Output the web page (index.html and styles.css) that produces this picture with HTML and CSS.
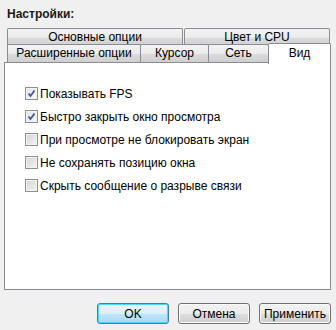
FILE: index.html
```html
<!DOCTYPE html>
<html>
<head>
    <meta charset="utf-8">
    <link rel="stylesheet" href="styles.css">
</head>
<body>
    <main class="dialog">
        <div class="title">Настройки:</div>
        <div class="tabs">
            <div class="tab-row">
                <div class="tab tab-main">Основные опции</div>
                <div class="tab tab-color">Цвет и CPU</div>
            </div>
            <div class="tab-row tab-row-front">
                <div class="tab tab-ext">Расширенные опции</div>
                <div class="tab tab-cursor">Курсор</div>
                <div class="tab tab-net">Сеть</div>
                <div class="tab tab-view active">Вид</div>
            </div>
        </div>
        <div class="panel">
            <label class="option"><span class="check checked"><svg viewBox="0 0 11 11" width="11" height="11"><path d="M2.5 5.5 L4.5 8 L8.5 2.5" fill="none" stroke="#3d5a9e" stroke-width="1.8"/></svg></span>Показывать FPS</label>
            <label class="option"><span class="check checked"><svg viewBox="0 0 11 11" width="11" height="11"><path d="M2.5 5.5 L4.5 8 L8.5 2.5" fill="none" stroke="#3d5a9e" stroke-width="1.8"/></svg></span>Быстро закрыть окно просмотра</label>
            <label class="option"><span class="check"></span>При просмотре не блокировать экран</label>
            <label class="option"><span class="check"></span>Не сохранять позицию окна</label>
            <label class="option"><span class="check"></span>Скрыть сообщение о разрыве связи</label>
        </div>
        <div class="buttons">
            <button class="btn default">OK</button>
            <button class="btn">Отмена</button>
            <button class="btn">Применить</button>
        </div>
    </main>
</body>
</html>
```

FILE: styles.css
```css
* {
    box-sizing: border-box;
}
body {
    margin: 0;
    background: #f0f0f0;
    font-family: "Liberation Sans", Arial, sans-serif;
    font-size: 12px;
    color: #000;
}
.dialog {
    width: 336px;
    height: 330px;
    padding-top: 6px;
}
.title {
    font-weight: bold;
    font-size: 12px;
    line-height: 16px;
    margin-left: 7px;
    margin-bottom: 6px;
    color: #1a1a1a;
}
.tabs {
    margin-left: 7px;
    width: 324px;
}
.tab-row {
    display: flex;
    height: 17px;
}
.tab-row-front {
    align-items: flex-end;
}
.tab {
    height: 18px;
    line-height: 16px;
    text-align: center;
    border: 1px solid #898c95;
    border-bottom: none;
    border-radius: 2px 2px 0 0;
    background: linear-gradient(#f3f3f3, #ebebeb 50%, #dcdcdc 51%, #cfcfcf);
    margin-right: -1px;
}
.tab-main {
    width: 176px;
}
.tab-color {
    width: 146px;
    margin-left: 2px;
}
.tab-ext {
    width: 134px;
}
.tab-cursor {
    width: 69px;
}
.tab-net {
    width: 61px;
}
.tab-view.active {
    position: relative;
    z-index: 1;
    width: 63px;
    height: 21px;
    margin-bottom: -2px;
    background: #fff;
    line-height: 18px;
}
.panel {
    margin-left: 4px;
    width: 327px;
    height: 228px;
    background: #fff;
    border: 1px solid #898c95;
    padding: 19px 0 0 20px;
}
.option {
    display: flex;
    align-items: center;
    height: 23px;
}
.check {
    width: 13px;
    height: 13px;
    border: 1px solid #8e8f8f;
    background: linear-gradient(135deg, #d2d4d8, #f4f4f4);
    box-shadow: inset 0 0 0 1px #f4f4f4;
    margin-right: 2px;
    display: flex;
    align-items: center;
    justify-content: center;
}
.check.checked {
    background: linear-gradient(135deg, #e0e4ea, #f8f8f8);
}
.buttons {
    display: flex;
    justify-content: flex-end;
    gap: 9px;
    margin-top: 13px;
    width: 331px;
}
.btn {
    width: 72px;
    height: 21px;
    font-family: "Liberation Sans", Arial, sans-serif;
    font-size: 12px;
    color: #000;
    border: 1px solid #707070;
    border-radius: 3px;
    background: linear-gradient(#f2f2f2, #ebebeb 50%, #dddddd 51%, #cfcfcf);
    box-shadow: inset 0 0 0 1px #fbfbfb;
    padding: 0;
}
.btn.default {
    border-color: #3c7fb1;
    background: linear-gradient(#eaf6fd, #d9f0fc 50%, #bee6fd 51%, #a7d9f5);
    box-shadow: inset 0 0 0 1px #48d8fb;
}
```
